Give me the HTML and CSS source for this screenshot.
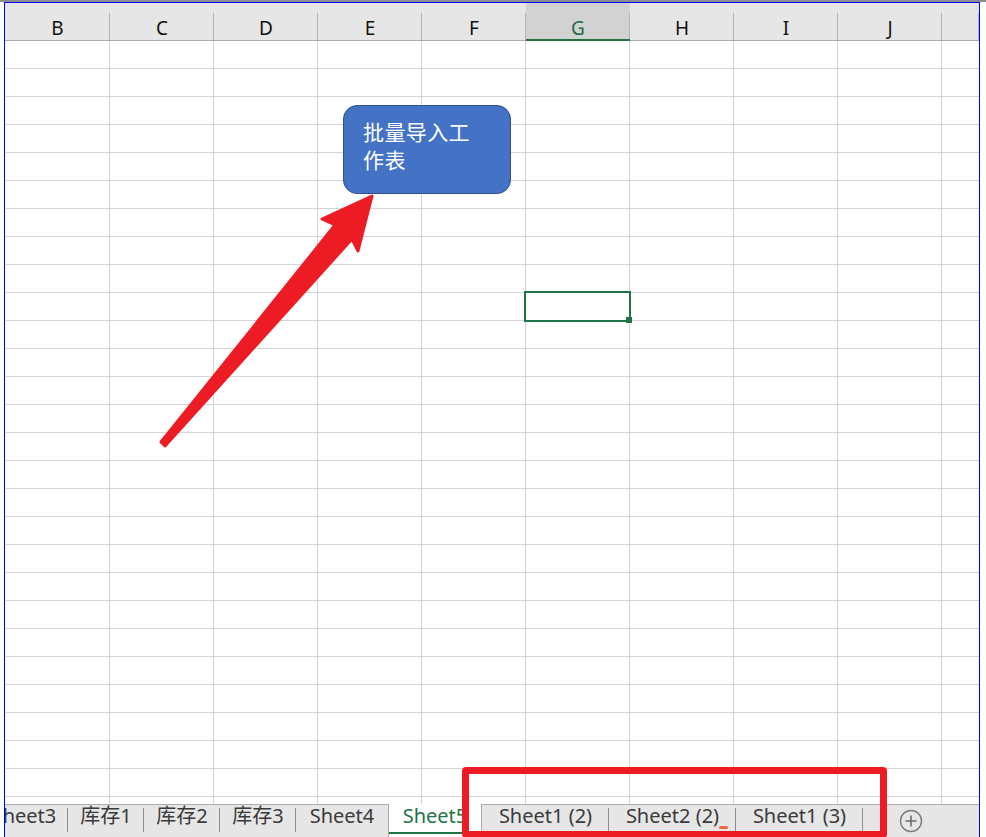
FILE: index.html
```html
<!DOCTYPE html>
<html lang="zh-CN">
  <head>
    <meta charset="UTF-8" />
    <meta name="viewport" content="width=device-width, initial-scale=1.0" />
    <title>批量导入工作表</title>
    <link rel="stylesheet" href="styles.css">
  </head>
  <body>
    <div class="topline"></div>
    <div class="book">
      <div class="colhead">
        <span>B</span>
        <span>C</span>
        <span>D</span>
        <span>E</span>
        <span>F</span>
        <span class="on">G</span>
        <span>H</span>
        <span>I</span>
        <span>J</span>
        <span></span>
      </div>
      <div class="cells"></div>
      <div class="tabbar">
        <div class="tabs">
          <span class="tab first">Sheet3</span>
          <span class="tab cn">库存1</span>
          <span class="tab cn">库存2</span>
          <span class="tab cn">库存3</span>
          <span class="tab plain nosep">Sheet4</span>
          <span class="tab active">Sheet5</span>
          <span class="tab wide">Sheet1 (2)</span>
          <span class="tab wide">Sheet2 (2)</span>
          <span class="tab wide">Sheet1 (3)</span>
        </div>
        <span class="addsheet">
          <svg width="24" height="24" viewBox="0 0 24 24">
            <circle cx="12" cy="12" r="10.5" fill="none" stroke="#7b7b7b" stroke-width="1.4" />
            <path d="M12 6.5v11M6.5 12h11" stroke="#6b6b6b" stroke-width="1.6" />
          </svg>
        </span>
      </div>
    </div>

    <!-- 선택된 셀, 도형, 화살표, 빨간 표시 -->
    <div class="selcell"><i></i></div>
    <div class="shape">批量导入工<br>作表</div>
    <svg class="arrow" width="986" height="837" viewBox="0 0 986 837">
      <polygon points="161,442 335,225 322,219 372,196 358,251 352,239 165,446"
        fill="#ed1c24" stroke="#ed1c24" stroke-width="3" stroke-linejoin="round" />
    </svg>
    <div class="redbox"></div>
    <span class="mark"></span>
  </body>
</html>
```

FILE: styles.css
```css
html,
body {
  margin: 0;
  height: 837px;
  overflow: hidden;
  background: #fff;
}
body {
  position: relative;
  font-family: "Noto Sans", "Noto Sans CJK SC", sans-serif;
}
.topline {
  height: 2px;
  background: #8c8c8c;
}
.book {
  margin-left: 4px;
  width: 974px;
  height: 835px;
  border: 1px solid #0000ff;
  border-bottom: 0;
  overflow: hidden;
  display: flex;
  flex-direction: column;
}

/* 열 머리글 */
.colhead {
  display: grid;
  grid-template-columns: 105px repeat(8, 104px) 1fr;
  background: #e6e6e6;
}
.colhead span {
  box-sizing: border-box;
  height: 38px;
  padding-top: 14px;
  line-height: 23px;
  font-size: 19px;
  text-align: center;
  color: #111;
  border-bottom: 1px solid #ababab;
  background: linear-gradient(#b4b4b4, #b4b4b4) no-repeat right bottom / 1px 27px;
}
.colhead span.on {
  background-color: #d2d2d2;
  color: #1e6b45;
  border-bottom-color: #217346;
  box-shadow: inset 0 -1px 0 #217346;
}

/* 셀 격자 */
.cells {
  height: 763px;
  padding-left: 1px;
  background-image: linear-gradient(to right, transparent 103px, #d4d4d4 103px),
    linear-gradient(to bottom, transparent 27px, #d4d4d4 27px);
  background-size: 104px 100%, 100% 28px;
  background-position: 1px 0, 0 0;
  background-clip: content-box;
}

/* 시트 탭 */
.tabbar {
  display: flex;
  height: 32px;
  border-top: 1px solid #ababab;
  background: #e6e6e6;
}
.tabs {
  display: flex;
  margin-left: -25px;
}
.tab {
  box-sizing: border-box;
  height: 32px;
  line-height: 22px;
  font-size: 20px;
  text-align: center;
  white-space: nowrap;
  color: #3a3a3a;
  background: linear-gradient(#8e8e8e, #8e8e8e) no-repeat right 3px / 1px 24px;
}
.tab.first {
  width: 88px;
}
.tab.cn {
  width: 76px;
}
.tab.plain {
  width: 92px;
}
.tab.nosep {
  background: none;
}
.tab.wide {
  width: 127px;
}
.tab.active {
  width: 94px;
  height: 33px;
  margin-top: -1px;
  padding-top: 1px;
  color: #217346;
  border-left: 1px solid #ababab;
  border-right: 1px solid #ababab;
  background: linear-gradient(#217346, #217346) no-repeat 0 28px / 100% 2px, #fff;
}
.addsheet {
  margin-left: 36px;
  padding-top: 4px;
}

/* 겹쳐진 요소 */
.selcell {
  position: absolute;
  left: 524px;
  top: 291px;
  width: 103px;
  height: 27px;
  border: 2px solid #217346;
}
.selcell i {
  position: absolute;
  right: -3px;
  bottom: -3px;
  width: 6px;
  height: 6px;
  background: #217346;
}
.shape {
  position: absolute;
  left: 343px;
  top: 105px;
  box-sizing: border-box;
  width: 168px;
  height: 89px;
  padding: 11px 0 0 19px;
  border: 1.5px solid #2f528f;
  border-radius: 14px;
  background: #4472c4;
  color: #fff;
  font-family: "Noto Sans CJK SC", sans-serif;
  font-size: 21px;
  line-height: 28px;
  letter-spacing: 0.4px;
}
.arrow {
  position: absolute;
  left: 0;
  top: 0;
  pointer-events: none;
}
.redbox {
  position: absolute;
  left: 462px;
  top: 767px;
  width: 411px;
  height: 57px;
  border: 7px solid #ed1c24;
  border-radius: 4px;
}
.mark {
  position: absolute;
  left: 719px;
  top: 826px;
  width: 9px;
  height: 3px;
  border-radius: 2px;
  background: #ee6a3a;
}
```
